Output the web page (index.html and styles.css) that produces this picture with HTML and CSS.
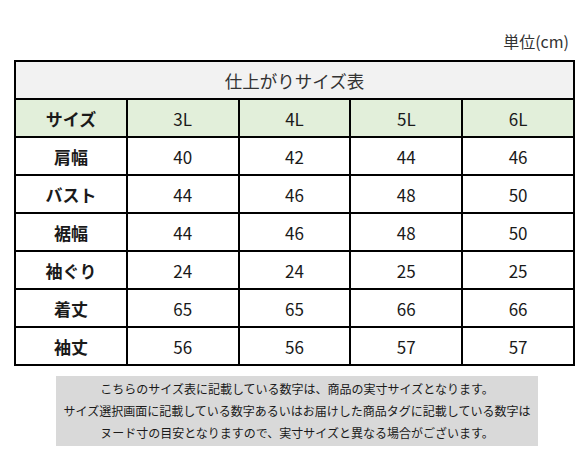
FILE: index.html
```html
<!DOCTYPE html>
<html lang="ja">
<head>
    <meta charset="UTF-8">
    <meta name="viewport" content="width=device-width, initial-scale=1.0">
    <title>仕上がりサイズ表</title>
    <link rel="stylesheet" href="styles.css">
</head>
<body>
    <div class="unit">単位(cm)</div>

    <table class="size-table">
        <tr class="title-row">
            <td colspan="5">仕上がりサイズ表</td>
        </tr>
        <tr class="head-row">
            <th>サイズ</th>
            <td>3L</td>
            <td>4L</td>
            <td>5L</td>
            <td>6L</td>
        </tr>
        <tr><th>肩幅</th><td>40</td><td>42</td><td>44</td><td>46</td></tr>
        <tr><th>バスト</th><td>44</td><td>46</td><td>48</td><td>50</td></tr>
        <tr><th>裾幅</th><td>44</td><td>46</td><td>48</td><td>50</td></tr>
        <tr><th>袖ぐり</th><td>24</td><td>24</td><td>25</td><td>25</td></tr>
        <tr><th>着丈</th><td>65</td><td>65</td><td>66</td><td>66</td></tr>
        <tr><th>袖丈</th><td>56</td><td>56</td><td>57</td><td>57</td></tr>
    </table>

    <div class="note">
        <p>こちらのサイズ表に記載している数字は、商品の実寸サイズとなります。</p>
        <p>サイズ選択画面に記載している数字あるいはお届けした商品タグに記載している数字は</p>
        <p>ヌード寸の目安となりますので、実寸サイズと異なる場合がございます。</p>
    </div>
</body>
</html>
```

FILE: styles.css
```css
body {
    margin: 0;
    background-color: #fff;
    color: #1a1a1a;
    font-family: "Noto Sans CJK JP", "Noto Sans", sans-serif;
}

.unit {
    text-align: right;
    font-size: 16px;
    line-height: 20px;
    padding: 31px 18px 0 0;
    height: 29px;
    color: #333;
}

.size-table {
    border-collapse: collapse;
    margin-left: 14px;
    width: 561px;
    table-layout: fixed;
}

.size-table td,
.size-table th {
    border: 2px solid #000;
    height: 36px;
    padding: 0;
    text-align: center;
    font-size: 17px;
    font-weight: 400;
}

.size-table th {
    font-weight: 700;
}

.title-row td {
    background-color: #f2f2f2;
    color: #333;
    font-size: 17.5px;
}

.head-row th,
.head-row td {
    background-color: #e2efda;
}

.note {
    margin: 10px 0 0 56px;
    width: 482px;
    padding: 2px 0;
    background-color: #d9d9d9;
    text-align: center;
    font-size: 12px;
    line-height: 22px;
}

.note p {
    margin: 0;
    white-space: nowrap;
}
```
